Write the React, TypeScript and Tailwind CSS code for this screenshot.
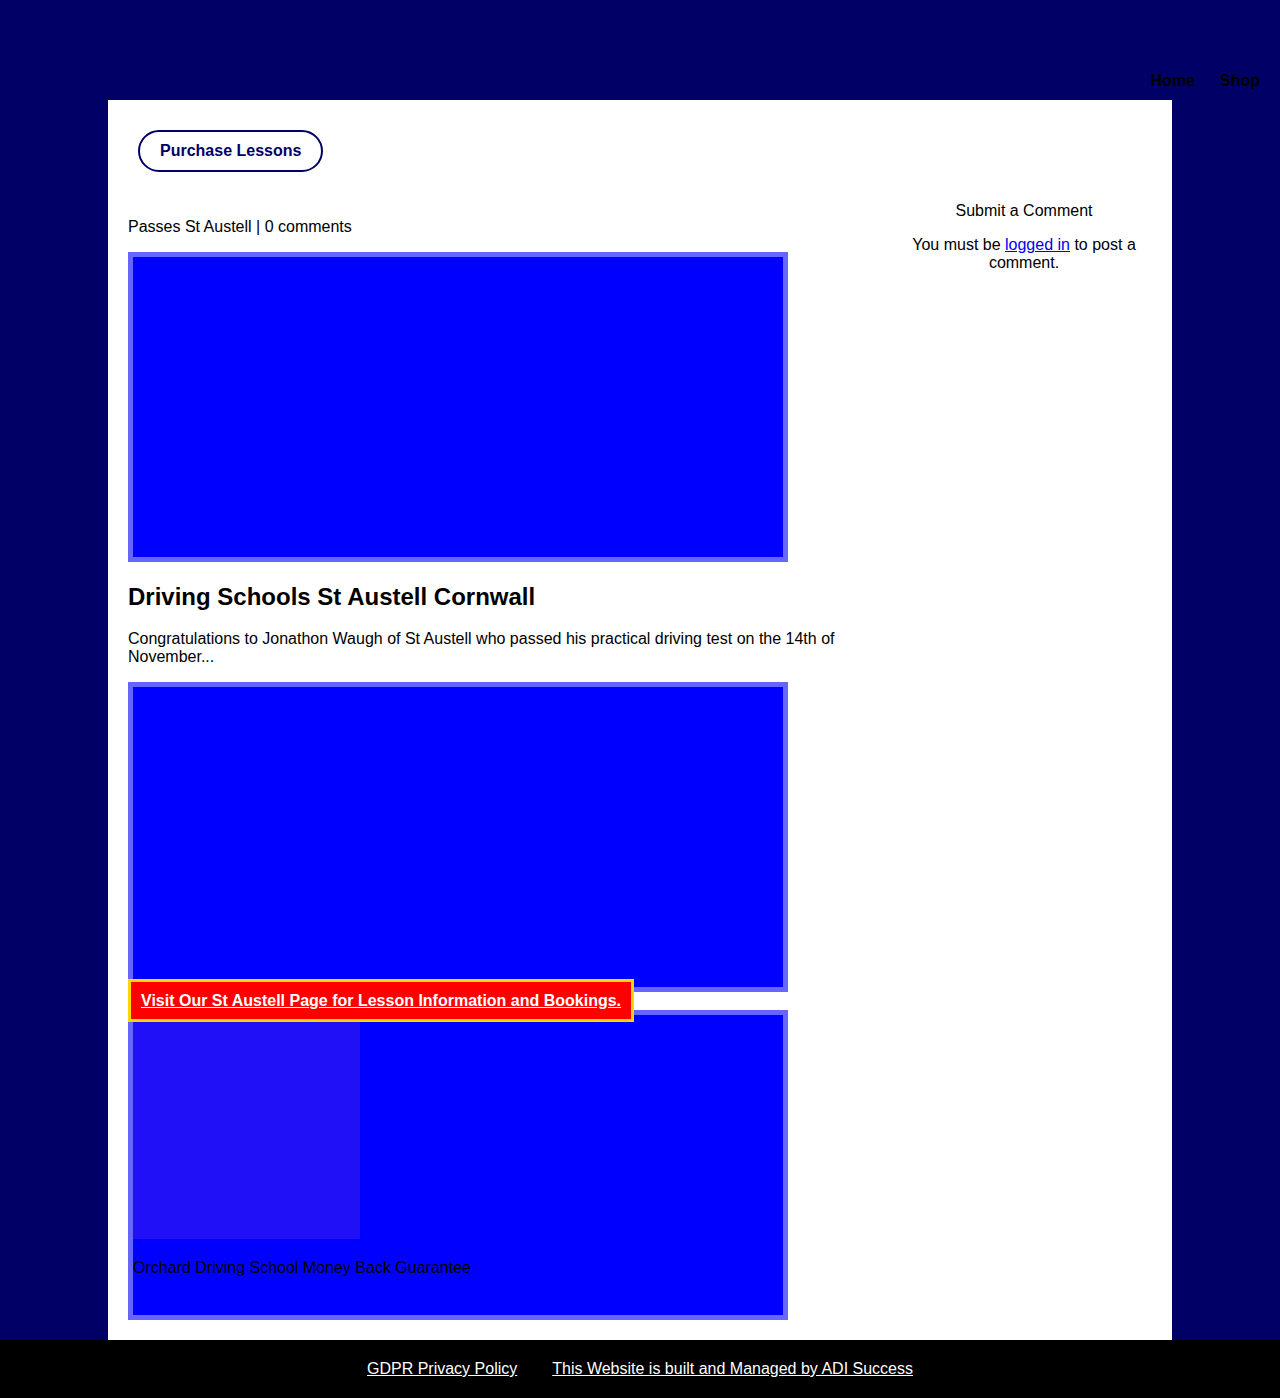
import React from "react";

const Img = ({ children }: { children?: React.ReactNode }) => (
  <div className="relative w-[660px] h-[310px] border-[5px] border-[#6666ff] bg-[#0000ff]">{children}</div>
);

export default function App() {
  return (
    <div className="min-h-[1398px] bg-[#000066] flex flex-col font-['Liberation_Sans',Arial,sans-serif] text-[16px] leading-[18px] text-black">
      <header className="h-[100px] flex items-start justify-end pr-[20px] pt-[72px]">
        <nav className="flex gap-[25px] font-bold">
          <a>Home</a>
          <a>Shop</a>
        </nav>
      </header>
      <main className="mx-[108px] bg-white px-[20px] pt-[30px] pb-[20px]">
        <div className="pl-[10px]">
          <button className="h-[42px] px-[20px] border-2 border-[#000066] rounded-full font-bold text-[#000066]">
            Purchase Lessons
          </button>
        </div>
        <div className="flex justify-between mt-[29px]">
          <div className="w-[740px] pt-[17px]">
            <p>Passes St Austell | 0 comments</p>
            <div className="mt-[16px]">
              <Img />
            </div>
            <h2 className="mt-[20px] pt-[1px] text-[24px] leading-[28px] font-bold">Driving Schools St Austell Cornwall</h2>
            <p className="mt-[18px] pt-[1px]">
              Congratulations to Jonathon Waugh of St Austell who passed his practical driving test on the 14th of November...
            </p>
            <div className="mt-[16px]">
              <Img />
            </div>
            <div className="mt-[18px]">
              <Img>
                <div className="w-[227px] h-[224px] bg-[#1f10f5]" />
                <p className="mt-[20px]">Orchard Driving School Money Back Guarantee</p>
                <a className="absolute left-[-5px] top-[-36px] border-[3px] border-[#ffd700] bg-[#ff0000] px-[10px] py-[9px] leading-[19px] font-bold text-white underline whitespace-nowrap">
                  Visit Our St Austell Page for Lesson Information and Bookings.
                </a>
              </Img>
            </div>
          </div>
          <aside className="w-[256px] pt-[1px] text-center">
            <h3>Submit a Comment</h3>
            <p className="mt-[16px]">
              You must be <a className="text-[#0000ee] underline">logged in</a> to post a comment.
            </p>
          </aside>
        </div>
      </main>
      <footer className="h-[58px] mt-auto bg-black flex items-center justify-center gap-[35px] text-white">
        <a className="underline">GDPR Privacy Policy</a>
        <a className="underline">This Website is built and Managed by ADI Success</a>
      </footer>
    </div>
  );
}
